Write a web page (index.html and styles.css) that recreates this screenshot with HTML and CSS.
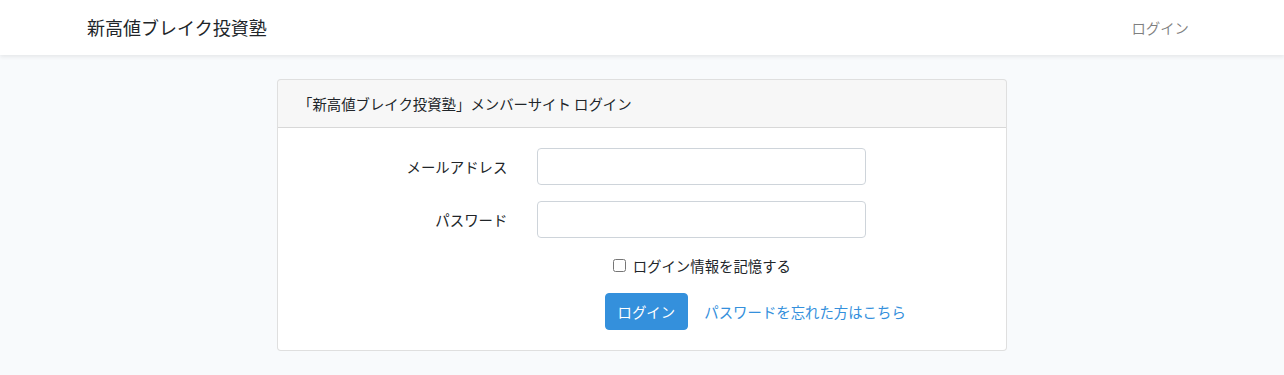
FILE: index.html
```html
<!DOCTYPE html>
<html lang="ja">
<head>
    <meta charset="UTF-8" />
    <meta name="viewport" content="width=device-width, initial-scale=1" />
    <title>新高値ブレイク投資塾 - ログイン</title>
    <link rel="stylesheet" href="styles.css">
</head>
<body>

    <nav class="navbar">
        <div class="container nav-inner">
            <a href="#" class="brand">新高値ブレイク投資塾</a>
            <ul class="nav-links">
                <li><a href="#" class="nav-link">ログイン</a></li>
            </ul>
        </div>
    </nav>

    <main class="main">
        <div class="container">
            <div class="card">
                <div class="card-header">「新高値ブレイク投資塾」メンバーサイト ログイン</div>
                <div class="card-body">
                    <form>
                        <div class="form-row">
                            <label for="email" class="col-label">メールアドレス</label>
                            <div class="col-input">
                                <input id="email" type="email" class="form-control" name="email">
                            </div>
                        </div>

                        <div class="form-row">
                            <label for="password" class="col-label">パスワード</label>
                            <div class="col-input">
                                <input id="password" type="password" class="form-control" name="password">
                            </div>
                        </div>

                        <div class="form-row">
                            <div class="col-offset col-check">
                                <div class="form-check">
                                    <input type="checkbox" id="remember" name="remember">
                                    <label for="remember">ログイン情報を記憶する</label>
                                </div>
                            </div>
                        </div>

                        <div class="form-row last">
                            <div class="col-offset col-actions">
                                <button type="submit" class="btn btn-primary">ログイン</button>
                                <a href="#" class="btn btn-link">パスワードを忘れた方はこちら</a>
                            </div>
                        </div>
                    </form>
                </div>
            </div>
        </div>
    </main>

</body>
</html>
```

FILE: styles.css
```css
* {
    margin: 0;
    padding: 0;
    box-sizing: border-box;
    font-family: "Noto Sans CJK JP", "Noto Sans", sans-serif;
}
body {
    background: #f8fafc;
    color: #212529;
    font-size: 14.4px;
    line-height: 1.6;
}
a {
    text-decoration: none;
}
.container {
    max-width: 1140px;
    margin: 0 auto;
    padding: 0 15px;
}

/* Navbar */
.navbar {
    background: #ffffff;
    box-shadow: 0 2px 4px rgba(0, 0, 0, 0.075);
}
.nav-inner {
    display: flex;
    justify-content: space-between;
    align-items: center;
    height: 55px;
}
.brand {
    color: #212529;
    font-size: 18px;
    line-height: 1.6;
}
.nav-links {
    list-style: none;
    display: flex;
}
.nav-link {
    display: block;
    padding: 8px;
    color: rgba(0, 0, 0, 0.5);
}

/* Card */
.main {
    padding: 24px 0;
}
.card {
    width: 730px;
    margin: 0 auto;
    background: #fff;
    border: 1px solid rgba(0, 0, 0, 0.125);
    border-radius: 4px;
    overflow: hidden;
}
.card-header {
    padding: 12px 20px;
    background: rgba(0, 0, 0, 0.03);
    border-bottom: 1px solid rgba(0, 0, 0, 0.125);
}
.card-body {
    padding: 20px;
}

/* Form grid */
.form-row {
    display: flex;
    margin: 0 -15px 16px;
}
.form-row.last {
    margin-bottom: 0;
}
.col-label {
    flex: 0 0 33.3333%;
    padding: 7px 15px;
    text-align: right;
}
.col-input {
    flex: 0 0 50%;
    padding: 0 15px;
}
.col-offset {
    margin-left: 33.3333%;
    padding: 0 15px;
    text-align: center;
}
.col-check {
    flex: 0 0 50%;
}
.col-actions {
    flex: 0 0 66.6667%;
}
.form-control {
    display: block;
    width: 100%;
    height: 37px;
    padding: 6px 12px;
    font-size: 14.4px;
    border: 1px solid #ced4da;
    border-radius: 4px;
    background: #fff;
    color: #495057;
}
.form-check {
    display: inline-flex;
    align-items: center;
    gap: 7px;
}
.form-check input {
    width: 13px;
    height: 13px;
    margin: 0;
}

/* Buttons */
.btn {
    display: inline-block;
    padding: 6px 12px;
    font-size: 14.4px;
    line-height: 1.6;
    border: 1px solid transparent;
    border-radius: 4px;
    vertical-align: middle;
}
.btn-primary {
    background: #3490dc;
    border-color: #3490dc;
    color: #fff;
}
.btn-link {
    color: #3490dc;
    background: none;
}
```
